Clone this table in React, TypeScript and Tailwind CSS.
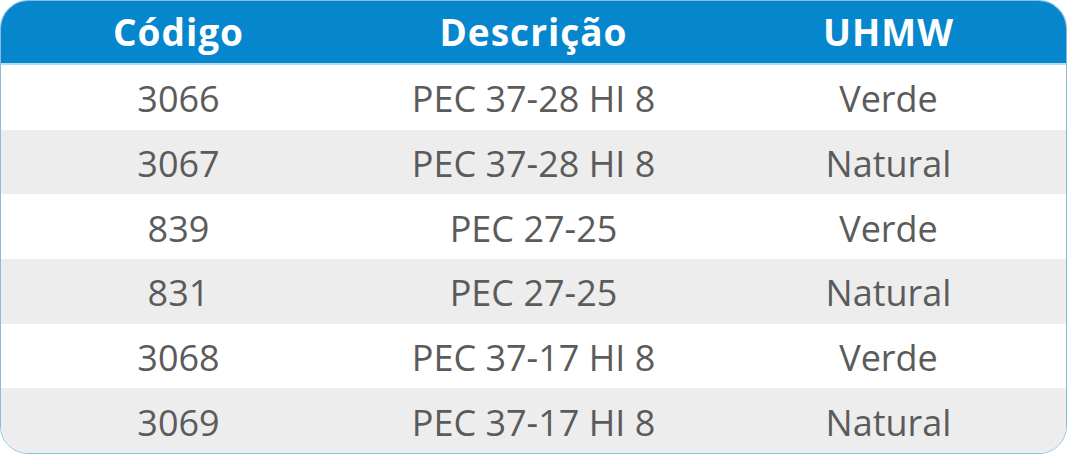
const rows = [
  { code: "3066", desc: "PEC 37-28 HI 8", uhmw: "Verde" },
  { code: "3067", desc: "PEC 37-28 HI 8", uhmw: "Natural" },
  { code: "839", desc: "PEC 27-25", uhmw: "Verde" },
  { code: "831", desc: "PEC 27-25", uhmw: "Natural" },
  { code: "3068", desc: "PEC 37-17 HI 8", uhmw: "Verde" },
  { code: "3069", desc: "PEC 37-17 HI 8", uhmw: "Natural" },
];

export default function App() {
  return (
    <div className="h-[458px] w-[1069px] bg-white font-['Open_Sans',sans-serif]">
      <div className="flex h-[454px] w-[1067px] flex-col overflow-hidden rounded-[28px] border border-[#86bedc]">
        <div className="grid h-[64px] shrink-0 grid-cols-3 border-b-2 border-[#b5ddf2] bg-[#0686cc] text-[37px] font-bold tracking-[1px] text-white">
          <div className="flex items-center justify-center">Código</div>
          <div className="flex items-center justify-center">Descrição</div>
          <div className="flex items-center justify-center">UHMW</div>
        </div>
        {rows.map((row, i) => (
          <div
            key={i}
            className={
              i % 2 === 1
                ? "grid flex-1 grid-cols-3 bg-[#ededed] text-[36px] text-[#5b5b5b]"
                : "grid flex-1 grid-cols-3 bg-white text-[36px] text-[#5b5b5b]"
            }
          >
            <div className="flex items-center justify-center pt-1">{row.code}</div>
            <div className="flex items-center justify-center pt-1">{row.desc}</div>
            <div className="flex items-center justify-center pt-1">{row.uhmw}</div>
          </div>
        ))}
      </div>
    </div>
  );
}
